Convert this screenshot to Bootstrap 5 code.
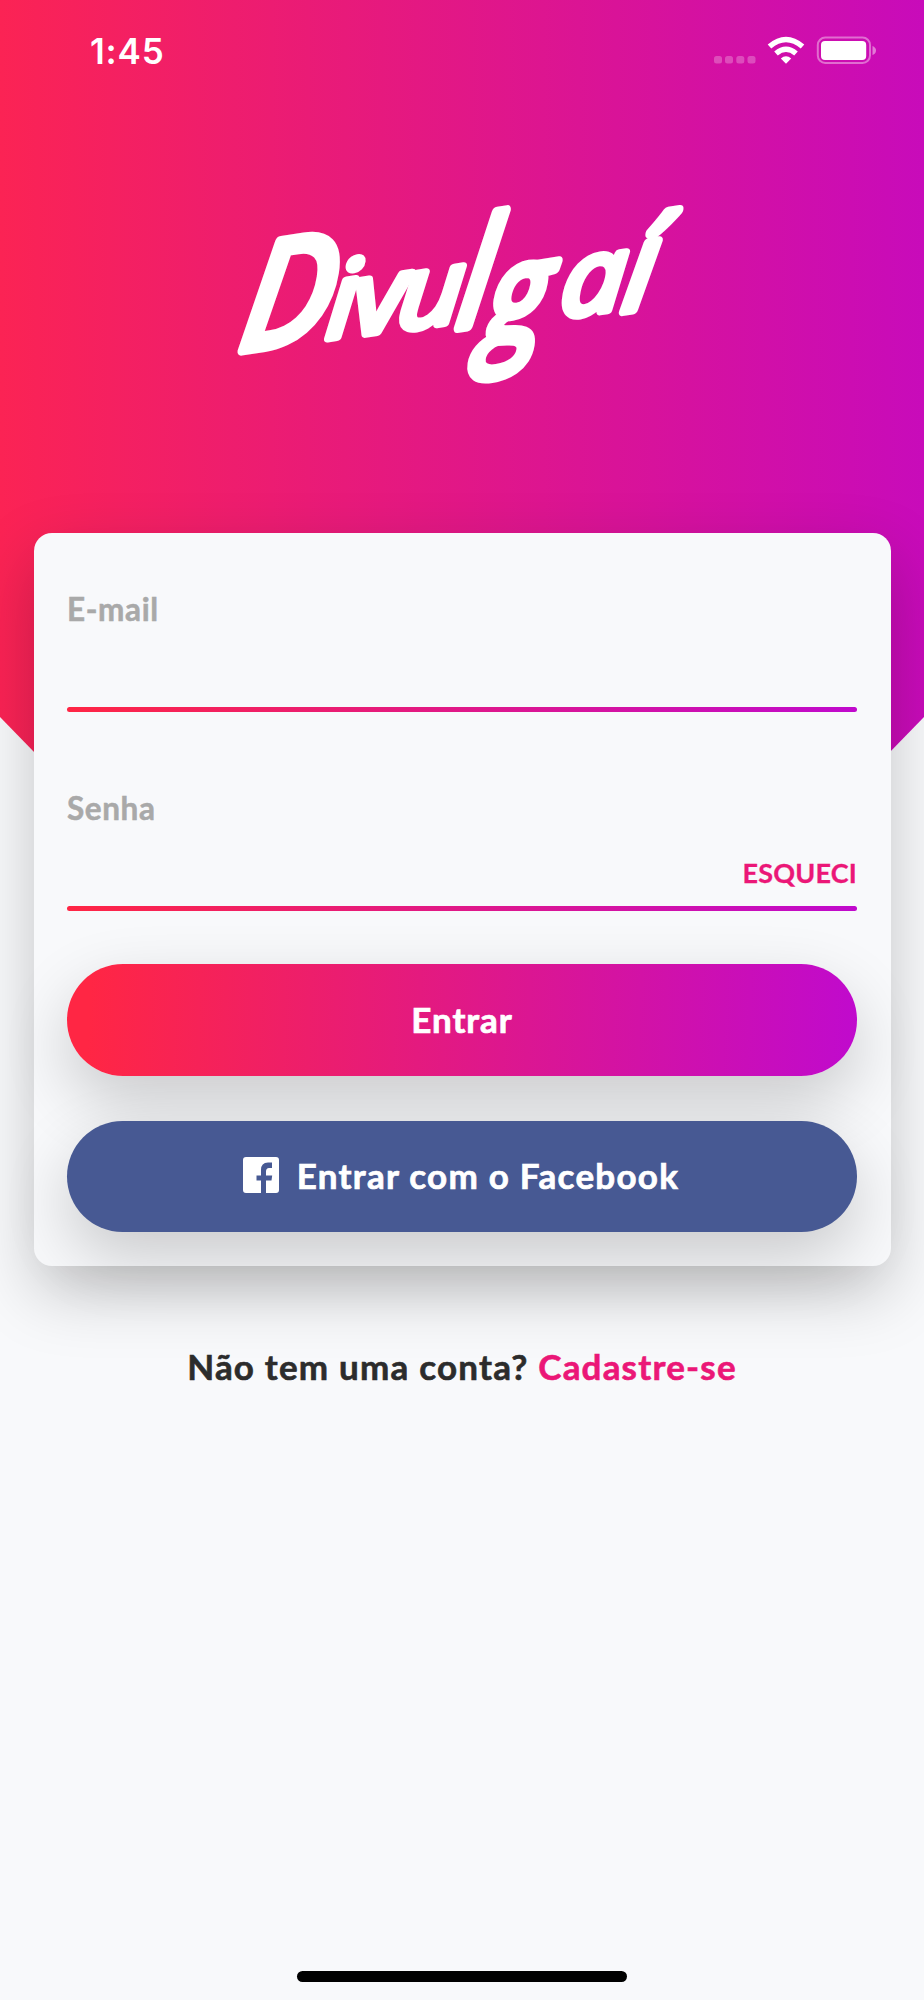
<!DOCTYPE html>
<html lang="pt-BR">
<head>
<meta charset="utf-8">
<meta name="viewport" content="width=device-width, initial-scale=1">
<title>Divulgaí</title>
<link href="https://cdn.jsdelivr.net/npm/bootstrap@5.3.0/dist/css/bootstrap.min.css" rel="stylesheet">
<style>
:root{--from:#ff2644;--to:#c00acd;--soft:0 26px 66px rgba(0,0,0,.21)}
body{background:#f8f9fb;font-family:Lato,"Open Sans",sans-serif;font-weight:700;color:#2c2c2c}
.screen{height:2000px;isolation:isolate}
.hero-bg{height:1180px;z-index:-1;background:linear-gradient(90deg,#fb2354,#c80bba);clip-path:polygon(0 0,100% 0,100% 717px,50% 1192px,0 717px)}
.status{height:100px;padding:2px 48px 0 90px}
.clock{font:600 35px/1 Inter,sans-serif;letter-spacing:.8px}
.logo-area{height:433px;padding-top:90px}
.logo-area svg{overflow:visible}
.login{margin:0 33.5px;width:857px;height:733px;border-radius:18px;background:#f8f9fb;box-shadow:var(--soft);padding:33.5px;--bs-card-border-width:0}
.field{height:199px}
.field.first{height:145px;padding-top:24.5px}
.field.second{padding-top:78px}
.field label{font-size:31.5px;line-height:36px;letter-spacing:.6px;color:#a9a9a9;-webkit-text-stroke:.5px}
.line{height:5px;border-radius:3px;background:linear-gradient(90deg,var(--from),var(--to))}
.forgot{font-size:27px;line-height:32px;color:#eb1777;margin-bottom:22px;letter-spacing:.2px;-webkit-text-stroke:.3px}
.action{height:111.5px;border:0;border-radius:56px;color:#fff;font-size:35px;font-weight:700;letter-spacing:.9px;box-shadow:0 26px 66px rgba(0,0,0,.19);padding-bottom:4px;-webkit-text-stroke:.7px}
.enter{margin-top:53px;padding-bottom:2px;background:linear-gradient(92deg,var(--from) 3%,var(--to))}
.fb{margin-top:45px;background:#475993;letter-spacing:1.25px}
.fb span{padding-top:1px}
.fb svg{margin:0 18px 0 -2px}
.signup{margin-top:75.5px;font-size:35px;line-height:48px;letter-spacing:1.2px;-webkit-text-stroke:.6px}
.signup a{color:#eb1777}
.home{left:297px;top:1971px;width:330px;height:11px;border-radius:6px;background:#000}
</style>
</head>
<body>
<main class="screen position-relative overflow-hidden">
  <div class="hero-bg position-absolute top-0 start-0 w-100"></div>
  <header class="status d-flex align-items-center justify-content-between text-white">
    <span class="clock">1:45</span>
    <svg width="164" height="32" viewBox="712 35 164 32" fill="#fff" aria-hidden="true">
      <g opacity=".25"><rect x="714" y="56" width="8" height="7.5" rx="2.5"/><rect x="725" y="56" width="8" height="7.5" rx="2.5"/><rect x="736.300" y="56" width="8" height="7.500" rx="2.5"/><rect x="747.500" y="56" width="8" height="7.500" rx="2.5"/></g>
      <g fill="none" stroke="#fff" stroke-width="5.5"><path d="M769.500 46.500Q786 32.500 802.500 46.500"/><path d="M776 53.500Q786 45 796 53.500"/></g>
      <path d="M780.800 58.400Q786 54 791.200 58.400L786 63.700Z"/>
      <rect x="817.800" y="37.500" width="52.200" height="25.500" rx="7.500" fill="none" stroke="#fff" stroke-width="2" opacity=".4"/>
      <rect x="821" y="41" width="45.200" height="19" rx="4"/>
      <path d="M872.500 46q3.500 1.500 3.500 4.500t-3.500 4.500z" opacity=".45"/>
    </svg>
  </header>
  <div class="logo-area text-center">
    <svg width="480" height="220" viewBox="0 0 480 220" role="img" aria-label="Divulgaí">
      <g fill="#fff" stroke="#fff" stroke-width="7.5" stroke-linejoin="round" font-family="Open Sans, sans-serif" font-style="italic" font-weight="400" font-size="100">
        <text transform="translate(15 161) rotate(-9) skewX(-18) scale(1.380 1.42)">D</text>
        <text transform="translate(103 149) rotate(-9) skewX(-14) scale(1.150 1.020)">i</text>
        <text transform="translate(131 146) rotate(-9) skewX(-10) scale(1.150 1)">v</text>
        <text transform="translate(174 141) rotate(-9) skewX(-14) scale(1.150 1)">u</text>
        <text transform="translate(233 138) rotate(-9) skewX(-18) scale(1.250 1.420)">l</text>
        <text transform="translate(258 157) rotate(-9) skewX(-18) scale(1.220 1.350)">g</text>
        <text transform="translate(337 128) rotate(-9) skewX(-14) scale(1.150 1.020)">a</text>
        <text transform="translate(398 122) rotate(-9) skewX(-18) scale(1.250 1.200)">í</text>
      </g>
    </svg>
  </div>
  <form class="login card">
    <div class="field first d-flex flex-column"><label>E-mail</label></div>
    <div class="line flex-shrink-0" style="margin-top:-4.5px"></div>
    <div class="field second d-flex flex-column justify-content-between"><label>Senha</label><a class="forgot text-end text-decoration-none">ESQUECI</a></div>
    <div class="line flex-shrink-0" style="margin-top:-5px"></div>
    <button type="button" class="action enter w-100 flex-shrink-0">Entrar</button>
    <button type="button" class="action fb w-100 flex-shrink-0 d-flex align-items-center justify-content-center">
      <svg width="36" height="36" viewBox="0 0 36 36" aria-hidden="true"><path fill="#fff" d="M3 0H33Q36 0 36 3V33Q36 36 33 36H23V23.500H28.500L29.200 18.500H23V14.500Q23 11 26 11H29V5.500H25Q18 5.500 18 13V18.500H13.500V23.500H18V36H3Q0 36 0 33V3Q0 0 3 0Z"/></svg>
      <span>Entrar com o Facebook</span>
    </button>
  </form>
  <p class="signup text-center mb-0">Não tem uma conta? <a class="text-decoration-none">Cadastre-se</a></p>
  <div class="home position-absolute"></div>
</main>
<script src="https://cdn.jsdelivr.net/npm/bootstrap@5.3.0/dist/js/bootstrap.bundle.min.js"></script>
</body>
</html>
